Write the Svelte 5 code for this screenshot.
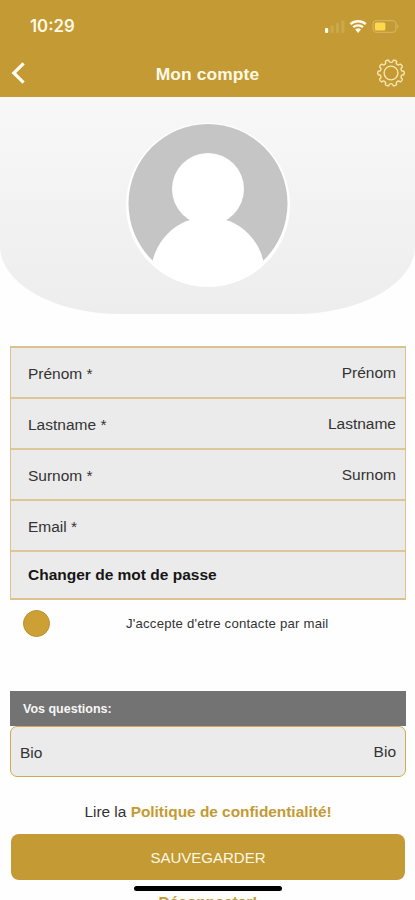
<script lang="ts">
    interface Field {
        label: string;
        value: string;
    }

    const fields: Field[] = [
        { label: 'Prénom *', value: 'Prénom' },
        { label: 'Lastname *', value: 'Lastname' },
        { label: 'Surnom *', value: 'Surnom' },
        { label: 'Email *', value: '' }
    ];

    let acceptsMail = $state(true);

    // Gear outline: rounded teeth around a ring.
    function gearPath(teeth: number, inner: number, outer: number): string {
        const step = (Math.PI * 2) / teeth;
        const at = (r: number, a: number) => `${(r * Math.sin(a)).toFixed(2)} ${(-r * Math.cos(a)).toFixed(2)}`;
        let d = '';
        for (let i = 0; i < teeth; i++) {
            const a = i * step + step / 2;
            d += `${i ? 'L' : 'M'}${at(outer - 0.5, a - step * 0.22)}`;
            d += `Q${at(outer + 0.5, a)} ${at(outer - 0.5, a + step * 0.22)}`;
            d += `Q${at(inner, a + step * 0.24)} ${at(inner, a + step * 0.5)}`;
            d += `Q${at(inner, a + step * 0.76)} ${at(outer - 0.5, a + step * 0.78)}`;
        }
        return d + 'Z';
    }
</script>

<div class="screen">
    <header>
        <div class="status-bar">
            <span class="time">10:29</span>
            <svg class="status-icons" width="76" height="16" viewBox="0 0 76 16" aria-hidden="true">
                <rect x="1" y="10" width="3.2" height="5" rx="1" fill="#fffbea" />
                <g fill="#cba84e">
                    <rect x="6.5" y="7.5" width="3.2" height="7.5" rx="1" />
                    <rect x="12" y="5" width="3.2" height="10" rx="1" />
                    <rect x="17.3" y="2.5" width="3.2" height="12.5" rx="1" />
                </g>
                <g fill="none" stroke="#fffbea" stroke-width="2.3">
                    <path d="M26.4 6.2a11.5 11.5 0 0 1 15.4 0" />
                    <path d="M29.2 9.2a7.3 7.3 0 0 1 9.8 0" />
                </g>
                <path d="M31.2 11.6a4.2 4.2 0 0 1 5.8 0L34.1 14.9z" fill="#fffbea" />
                <rect x="49" y="2.7" width="23" height="11.6" rx="3.2" fill="none" stroke="#d9b868" />
                <rect x="50.8" y="4.5" width="10.6" height="8" rx="1.5" fill="#fbd84e" />
                <path d="M73.4 6.3q2.2 2.2 0 4.4z" fill="#d9b868" />
            </svg>
        </div>
        <nav>
            <button class="back" aria-label="Retour">
                <svg width="16" height="24" viewBox="0 0 16 24">
                    <path d="M13.6 2.4 3.8 12 13.6 21.6" fill="none" stroke="#fffdf3" stroke-width="3.2" />
                </svg>
            </button>
            <h1>Mon compte</h1>
            <button class="settings" aria-label="Réglages">
                <svg width="30" height="30" viewBox="-15 -15 30 30">
                    <g fill="none" stroke="#f8e7b5" stroke-width="1.4" stroke-linejoin="round">
                        <path d={gearPath(10, 10.6, 13.4)} />
                        <circle r="6.9" />
                    </g>
                </svg>
            </button>
        </nav>
    </header>

    <section class="hero">
        <svg width="164" height="164" viewBox="0 0 164 164" aria-label="Photo de profil">
            <defs>
                <clipPath id="portrait"><circle cx="82" cy="82" r="81" /></clipPath>
            </defs>
            <circle cx="82" cy="82" r="82" fill="#fff" />
            <circle cx="82" cy="80.5" r="79.5" fill="#c5c5c5" />
            <g fill="#fff" clip-path="url(#portrait)">
                <circle cx="82" cy="66" r="36" />
                <circle cx="82" cy="151" r="57" />
            </g>
        </svg>
    </section>

    <main>
        <div class="fields">
            {#each fields as field}
                <div class="field">
                    <span>{field.label}</span>
                    <span class="value">{field.value}</span>
                </div>
            {/each}
            <div class="field password">Changer de mot de passe</div>
        </div>

        <div class="consent">
            <button
                class="dot"
                class:checked={acceptsMail}
                aria-label="Accepter"
                onclick={() => (acceptsMail = !acceptsMail)}
            ></button>
            <span>J'accepte d'etre contacte par mail</span>
        </div>

        <h2>Vos questions:</h2>
        <div class="bio">
            <span>Bio</span>
            <span class="value">Bio</span>
        </div>

        <p class="privacy">Lire la <b>Politique de confidentialité!</b></p>
        <button class="save">SAUVEGARDER</button>
        <button class="logout">Déconnecter!</button>
    </main>
    <div class="home-indicator"></div>
</div>

<style>
    :global(body) {
        overflow: hidden;
    }

    .screen {
        position: relative;
        width: 415px;
        height: 900px;
        overflow: hidden;
        background: #fefefe;
        color: #333;
        font-family: "Liberation Sans", Arial, sans-serif;
        font-size: 15.5px;
    }

    button {
        padding: 0;
        border: 0;
        background: none;
        font-family: inherit;
    }

    svg {
        display: block;
    }

    header {
        height: 97px;
        background: #c39a33;
        color: #fff9e6;
    }

    .status-bar {
        display: flex;
        justify-content: space-between;
        align-items: center;
        height: 50px;
        padding: 2px 15px 0 30px;
        box-sizing: border-box;
    }

    .time {
        font-family: Inter, sans-serif;
        font-size: 16.8px;
        font-weight: 600;
    }

    nav {
        display: grid;
        grid-template-columns: 50px 1fr 50px;
        align-items: center;
        height: 46px;
    }

    .back {
        padding-left: 10px;
    }

    .settings {
        padding-left: 11px;
    }

    h1 {
        margin: 3px 0 0;
        font-size: 17.4px;
        letter-spacing: 0.1px;
        text-align: center;
    }

    .hero {
        display: flex;
        justify-content: center;
        height: 217px;
        padding: 26px 0 0 1px;
        box-sizing: border-box;
        border-radius: 0 0 120px 120px / 0 0 68px 68px;
        background: linear-gradient(#f8f8f8, #ededed);
    }

    main {
        display: flex;
        flex-direction: column;
        padding: 32px 9px 0 10px;
    }

    .fields {
        border: 2px solid #dcc28c;
        border-width: 2px 1.5px;
        background: #ebebeb;
    }

    .field {
        display: flex;
        justify-content: space-between;
        align-items: center;
        height: 51px;
        padding: 2px 9px 0 17px;
        box-sizing: border-box;
        border-bottom: 2px solid #dfc697;
    }

    .value {
        margin-top: -2px;
    }

    .field.password {
        height: 46px;
        padding-top: 0;
        border-bottom: 0;
        color: #151515;
        font-weight: bold;
    }

    .consent {
        display: flex;
        align-items: center;
        gap: 76px;
        height: 47px;
        padding-left: 13px;
        font-size: 13.2px;
        letter-spacing: 0.2px;
    }

    .dot {
        width: 27px;
        height: 27px;
        border: 1px solid #b8912f;
        border-radius: 50%;
        background: #fff;
    }

    .dot.checked {
        background: #cda035;
    }

    h2 {
        height: 35px;
        margin: 44px 0 0;
        padding-left: 13px;
        background: #737373;
        color: #f7f7f7;
        font-size: 12.5px;
        line-height: 36px;
    }

    .bio {
        display: flex;
        justify-content: space-between;
        align-items: center;
        height: 51px;
        padding: 3px 9px 0;
        box-sizing: border-box;
        border: 1px solid #cda951;
        border-radius: 7px;
        background: #ebebeb;
    }

    .bio .value {
        margin-top: -3px;
    }

    .privacy {
        margin: 26px 0 0;
        font-size: 15.4px;
        line-height: 18px;
        text-align: center;
    }

    .privacy b {
        color: #c39a33;
    }

    .save {
        height: 46px;
        margin: 13px 1px 0;
        border-radius: 8px;
        background: #c39a33;
        color: #fff8e4;
        font-size: 15px;
    }

    .logout {
        margin-top: 13px;
        color: #c39a33;
        font-size: 15.5px;
        font-weight: bold;
    }

    .home-indicator {
        position: absolute;
        left: 134px;
        top: 886px;
        width: 148px;
        height: 5px;
        border-radius: 3px;
        background: #000;
    }
</style>
